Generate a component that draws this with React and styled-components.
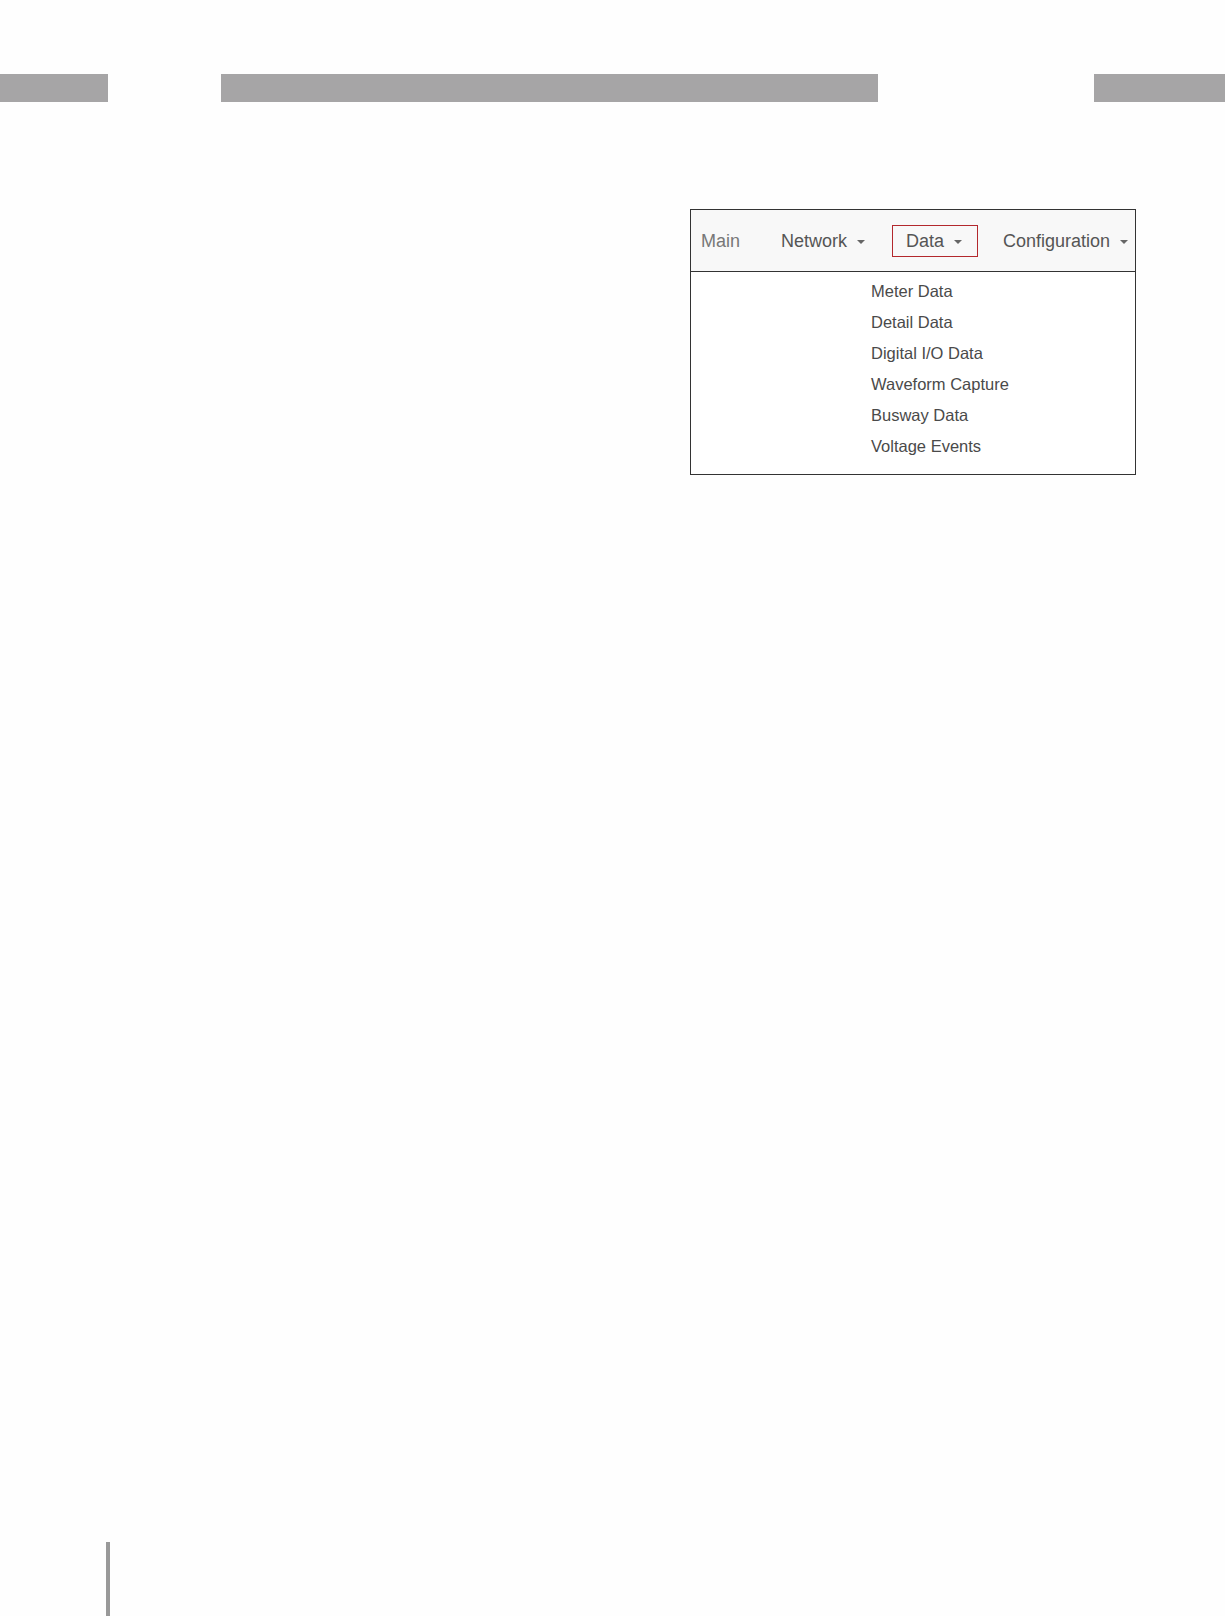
import React from 'react'
import styled, { createGlobalStyle } from 'styled-components'

const GlobalStyle = createGlobalStyle`
  html, body {
    margin: 0;
    padding: 0;
    background: #fefefe;
  }
  body {
    font-family: "Liberation Sans", Arial, sans-serif;
  }
`

const navItems = [
  { label: 'Main', caret: false, muted: true },
  { label: 'Network', caret: true },
  { label: 'Data', caret: true, active: true },
  { label: 'Configuration', caret: true },
]

const dataItems = [
  'Meter Data',
  'Detail Data',
  'Digital I/O Data',
  'Waveform Capture',
  'Busway Data',
  'Voltage Events',
]

export default function App() {
  return (
    <Page>
      <GlobalStyle />
      <HeaderBars>
        <Bar $width={108} />
        <Gap $width={113} />
        <Bar $width={657} />
        <Gap $width={216} />
        <Bar $width={131} />
      </HeaderBars>

      <Content>
        <MenuFrame>
          <NavBar>
            {navItems.map((item) => (
              <NavItem key={item.label} $active={item.active} $muted={item.muted}>
                {item.label}
                {item.caret && <Caret />}
              </NavItem>
            ))}
          </NavBar>
          <DropList>
            {dataItems.map((name) => (
              <DropItem key={name}>{name}</DropItem>
            ))}
          </DropList>
        </MenuFrame>
      </Content>

      <PageEdge />
    </Page>
  )
}

const Page = styled.div`
  min-height: 1616px;
  display: flex;
  flex-direction: column;
`

const HeaderBars = styled.div`
  margin-top: 74px;
  height: 28px;
  display: flex;
`

const Bar = styled.div`
  width: ${(p) => p.$width}px;
  background-color: #a6a5a6;
`

const Gap = styled.div`
  width: ${(p) => p.$width}px;
`

const Content = styled.div`
  flex: 1;
  padding-top: 107px;
  padding-left: 690px;
`

const MenuFrame = styled.div`
  width: 444px;
  border: 1px solid #333;
  background: #fff;
`

const NavBar = styled.div`
  height: 61px;
  display: flex;
  align-items: center;
  gap: 11px;
  background-color: #f8f8f8;
  border-bottom: 1px solid #333;
  overflow: hidden;
  white-space: nowrap;
`

const NavItem = styled.div`
  height: 29px;
  padding: 1px 15px 0 13px;
  display: flex;
  align-items: center;
  gap: 10px;
  border: 1px solid ${(p) => (p.$active ? '#b3282d' : 'transparent')};
  font-size: 18px;
  color: ${(p) => (p.$muted ? '#777' : '#555')};

  &:first-child {
    padding-left: 9px;
  }
`

const Caret = styled.span`
  width: 0;
  height: 0;
  margin-top: 2px;
  border-left: 4.5px solid transparent;
  border-right: 4.5px solid transparent;
  border-top: 4.5px solid #666;
`

const DropList = styled.div`
  padding: 4px 0 12px 180px;
  display: flex;
  flex-direction: column;
`

const DropItem = styled.div`
  font-size: 16.5px;
  line-height: 31px;
  color: #4a4a4a;
`

const PageEdge = styled.div`
  margin-left: 106px;
  width: 4px;
  height: 74px;
  background-color: #999;
`
